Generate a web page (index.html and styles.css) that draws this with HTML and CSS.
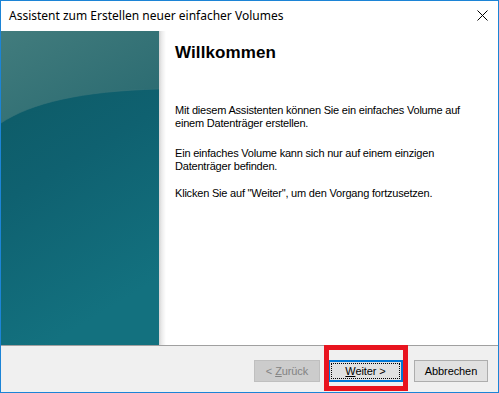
FILE: index.html
```html
<!DOCTYPE html>
<html lang="de">
<head>
<meta charset="utf-8">
<title>Assistent zum Erstellen neuer einfacher Volumes</title>
<link rel="stylesheet" href="styles.css">
</head>
<body>
<div class="window">
  <div class="titlebar">
    <span class="title">Assistent zum Erstellen neuer einfacher Volumes</span>
    <svg class="close" width="11" height="11" viewBox="0 0 11 11"><path d="M0.5 0.5 L10.5 10.5 M10.5 0.5 L0.5 10.5" stroke="#000" stroke-width="1" fill="none"/></svg>
  </div>
  <div class="main">
    <div class="side">
      <svg width="158" height="314" viewBox="0 0 158 314">
        <defs>
          <linearGradient id="lower" x1="0" y1="0" x2="0.3" y2="1">
            <stop offset="0" stop-color="#0d5862"/>
            <stop offset="0.5" stop-color="#0f6170"/>
            <stop offset="1" stop-color="#13717f"/>
          </linearGradient>
          <linearGradient id="upper" x1="0" y1="0" x2="1" y2="1">
            <stop offset="0" stop-color="#427c7d"/>
            <stop offset="1" stop-color="#286970"/>
          </linearGradient>
        </defs>
        <rect width="158" height="314" fill="url(#lower)"/>
        <path d="M0 92 C 30 72 80 60 158 58 L158 0 L0 0 Z" fill="url(#upper)"/>
        <path d="M0 92 C 30 72 80 60 158 58" stroke="#3a7479" stroke-width="1" fill="none" opacity="0.6"/>
      </svg>
    </div>
    <div class="shadow"></div>
    <div class="content">
      <h1 class="heading">Willkommen</h1>
      <p class="para first">Mit diesem Assistenten können Sie ein einfaches Volume auf<br>einem Datenträger erstellen.</p>
      <p class="para second">Ein einfaches Volume kann sich nur auf einem einzigen<br>Datenträger befinden.</p>
      <p class="para">Klicken Sie auf "Weiter", um den Vorgang fortzusetzen.</p>
    </div>
  </div>
  <div class="footer">
    <div class="btn btn-disabled btn-back"><span>&lt; <u>Z</u>urück</span></div>
    <div class="btn btn-default btn-next"><span class="focus"><span><u>W</u>eiter &gt;</span></span></div>
    <div class="btn btn-cancel"><span>Abbrechen</span></div>
  </div>
  <div class="highlight"></div>
</div>
</body>
</html>
```
FILE: styles.css
```css
html, body {
  margin: 0;
  padding: 0;
  background: #ffffff;
}

.window {
  position: relative;
  width: 499px;
  height: 393px;
  box-sizing: border-box;
  border: 1px solid #1c84d6;
  display: flex;
  flex-direction: column;
  background: #ffffff;
  overflow: hidden;
}

.titlebar {
  height: 30px;
  flex: none;
  display: flex;
  align-items: center;
  justify-content: space-between;
  padding: 0 10px 0 8px;
  background: #ffffff;
}

.title {
  font-family: "Noto Sans", "Open Sans", sans-serif;
  font-size: 12px;
  color: #000000;
  letter-spacing: 0;
  margin-top: -1px;
}

.close {
  display: block;
  margin-top: -1px;
}

.main {
  height: 314px;
  flex: none;
  display: flex;
  border-bottom: 1px solid #a0a0a0;
}

.side {
  width: 158px;
  flex: none;
}

.side svg {
  display: block;
}

.shadow {
  width: 7px;
  flex: none;
  background: linear-gradient(to right, #d4d4d4, #ececec 40%, #ffffff);
}

.content {
  flex: 1;
  padding: 12px 0 0 9px;
  font-family: "Liberation Sans", Arial, sans-serif;
  color: #000000;
}

.heading {
  margin: 0 0 41px 0;
  font-family: "Liberation Sans", Arial, sans-serif;
  font-weight: bold;
  font-size: 17px;
  line-height: 20px;
  letter-spacing: 0.1px;
}

.para {
  margin: 0 0 14px 0;
  font-size: 11px;
  line-height: 13px;
  letter-spacing: -0.2px;
}

.para.first {
  margin-bottom: 17px;
}

.footer {
  flex: 1;
  background: #f0f0f0;
  display: flex;
  align-items: flex-start;
  justify-content: flex-end;
  padding: 14px 10px 0 0;
  gap: 8px;
}

.btn {
  height: 22px;
  box-sizing: border-box;
  display: flex;
  align-items: center;
  justify-content: center;
  font-family: "Liberation Sans", Arial, sans-serif;
  font-size: 11px;
  letter-spacing: -0.1px;
  color: #000000;
  background: #e1e1e1;
  border: 1px solid #adadad;
  white-space: pre;
}

.btn u {
  text-underline-offset: 1px;
}

.btn-back {
  width: 66px;
}

.btn-disabled {
  background: #cccccc;
  border-color: #bfbfbf;
  color: #838383;
}

.btn-next {
  width: 75px;
  border: 2px solid #0078d7;
  padding: 1px;
}

.focus {
  flex: 1;
  align-self: stretch;
  display: flex;
  align-items: center;
  justify-content: center;
  border: 1px dotted #000000;
}

.btn-cancel {
  width: 74px;
  margin-left: 3px;
}

.highlight {
  position: absolute;
  left: 323px;
  top: 344px;
  width: 84px;
  height: 46px;
  box-sizing: border-box;
  border: 5px solid #e8141f;
}
```
